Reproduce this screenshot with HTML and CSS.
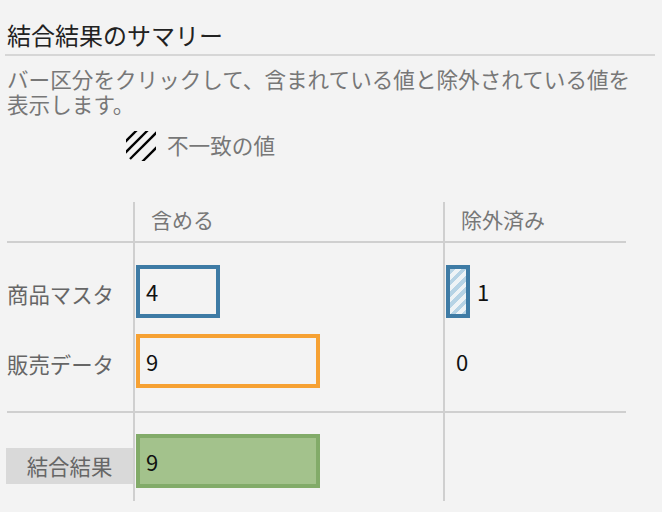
FILE: index.html
```html
<!DOCTYPE html>
<html lang="ja">
<head>
<meta charset="utf-8">
<link rel="stylesheet" href="styles.css">
</head>
<body>
<div class="page">
  <h1 class="title">結合結果のサマリー</h1>
  <p class="desc">バー区分をクリックして、含まれている値と除外されている値を表示します。</p>
  <div class="legend">
    <svg class="legend-icon" width="30" height="30" viewBox="0 0 30 30">
      <defs><clipPath id="c"><rect x="0" y="0" width="30" height="30"/></clipPath></defs>
      <g clip-path="url(#c)" stroke="#000" stroke-width="2.3" stroke-linecap="butt">
        <line x1="-2" y1="12" x2="12" y2="-2"/>
        <line x1="-2" y1="23" x2="23" y2="-2"/>
        <line x1="4" y1="28" x2="32" y2="0"/>
        <line x1="15" y1="32" x2="32" y2="15"/>
      </g>
    </svg>
    <span class="legend-text">不一致の値</span>
  </div>

  <div class="table">
    <div class="cell head c1"></div>
    <div class="cell head c2">含める</div>
    <div class="cell head c3">除外済み</div>

    <div class="cell r1 c1"><div class="inner label">商品マスタ</div></div>
    <div class="cell r1 c2"><div class="inner"><div class="bar blue" style="width:84px">4</div></div></div>
    <div class="cell r1 c3"><div class="inner"><div class="mini"></div><span class="num">1</span></div></div>

    <div class="cell r2 c1"><div class="inner label">販売データ</div></div>
    <div class="cell r2 c2"><div class="inner"><div class="bar orange" style="width:184px">9</div></div></div>
    <div class="cell r2 c3"><div class="inner"><span class="num zero">0</span></div></div>

    <div class="cell tot c1"><div class="tot-label">結合結果</div></div>
    <div class="cell tot c2"><div class="inner"><div class="bar green" style="width:184px">9</div></div></div>
    <div class="cell tot c3"></div>
  </div>
</div>
</body>
</html>
```

FILE: styles.css
```css
html, body {
  margin: 0;
  padding: 0;
  background: #f3f3f3;
}
body {
  font-family: "Noto Sans CJK JP", "Noto Sans", sans-serif;
  width: 662px;
  height: 512px;
  overflow: hidden;
}
.page {
  padding-top: 19px;
}
.title {
  margin: 0 7px 0 5px;
  padding: 0 0 3px 2px;
  font-size: 24px;
  line-height: 32px;
  font-weight: normal;
  color: #222;
  border-bottom: 2px solid #d6d6d6;
}
.desc {
  margin: 10px 0 0 7px;
  max-width: 640px;
  font-size: 21.6px;
  line-height: 25px;
  color: #777;
}
.legend {
  margin: 15px 0 0 126px;
  display: flex;
  align-items: center;
  gap: 11px;
  height: 30px;
}
.legend-icon {
  display: block;
  flex: none;
}
.legend-text {
  font-size: 21.6px;
  line-height: 30px;
  color: #777;
  margin-top: -3px;
}
.table {
  margin: 41px 0 0 7px;
  display: grid;
  grid-template-columns: 126px 310px 183px;
  font-size: 21px;
}
.cell.c2, .cell.c3 {
  border-left: 2px solid #cfcfcf;
}
.head {
  height: 39px;
  border-bottom: 2px solid #cfcfcf;
  line-height: 34px;
  color: #777;
  padding-left: 16px;
}
.head.c1 { padding-left: 0; }
.r1 { padding-top: 21px; padding-bottom: 8px; }
.r2 { padding-top: 8px; padding-bottom: 23px; border-bottom: 2px solid #cfcfcf; }
.tot { padding-top: 21px; padding-bottom: 13px; }
.inner {
  height: 54px;
  display: flex;
  align-items: center;
  padding-left: 1px;
}
.label {
  padding-left: 0;
  padding-top: 4px;
  box-sizing: border-box;
  color: #666;
  font-size: 21.4px;
}
.bar {
  box-sizing: border-box;
  height: 54px;
  border: 4px solid;
  padding-left: 6px;
  display: flex;
  align-items: center;
  color: #111;
  font-size: 22px;
}
.bar.blue { border-color: #3e7ba5; height: 53px; }
.bar.orange { border-color: #f6a133; }
.bar.green { border-color: #82ab69; background: #a3c28c; }
.mini {
  box-sizing: border-box;
  width: 24px;
  height: 53px;
  border: 4px solid #3e7ba5;
  background: repeating-linear-gradient(135deg, #b6d3e5 0 4px, #eef3f6 4px 8px);
}
.num {
  margin-left: 7px;
  color: #111;
  font-size: 22px;
}
.num.zero { margin-left: 10px; }
.tot-label {
  margin: 14px 0 0 -1px;
  width: 127px;
  height: 36px;
  background: #d9d9d9;
  color: #666;
  font-size: 21.4px;
  line-height: 36px;
  text-align: center;
}
```
